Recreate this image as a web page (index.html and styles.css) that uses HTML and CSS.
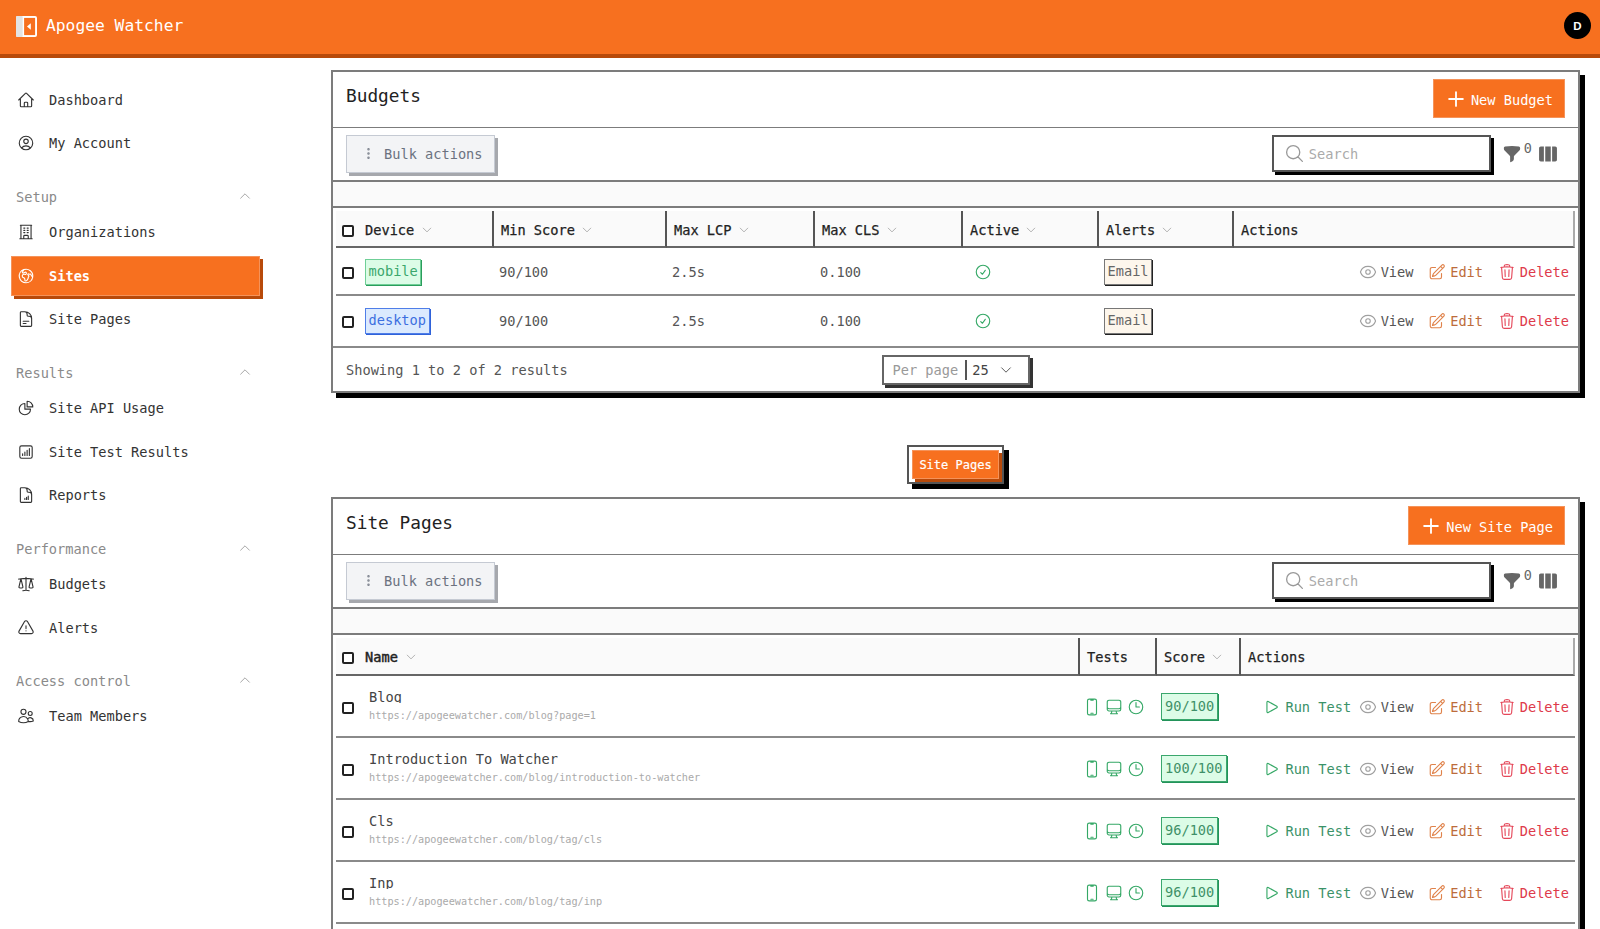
FILE: index.html
```html
<!DOCTYPE html>
<html lang="en">
<head>
<meta charset="utf-8">
<title>Apogee Watcher</title>
<link rel="stylesheet" href="styles.css">
</head>
<body>
<svg class="sprite" xmlns="http://www.w3.org/2000/svg">
<symbol id="i-home" viewBox="0 0 24 24"><path d="m2.25 12 8.954-8.955c.44-.439 1.152-.439 1.591 0L21.75 12M4.5 9.75v10.125c0 .621.504 1.125 1.125 1.125H9.75v-4.875c0-.621.504-1.125 1.125-1.125h2.25c.621 0 1.125.504 1.125 1.125V21h4.125c.621 0 1.125-.504 1.125-1.125V9.75M8.25 21h8.25"/></symbol>
<symbol id="i-user" viewBox="0 0 24 24"><path d="M17.982 18.725A7.488 7.488 0 0 0 12 15.75a7.488 7.488 0 0 0-5.982 2.975m11.963 0a9 9 0 1 0-11.963 0m11.963 0A8.966 8.966 0 0 1 12 21a8.966 8.966 0 0 1-5.982-2.275M15 9.75a3 3 0 1 1-6 0 3 3 0 0 1 6 0Z"/></symbol>
<symbol id="i-building" viewBox="0 0 24 24"><path d="M3.75 21h16.5M4.5 3h15M5.25 3v18m13.5-18v18M9 6.75h1.5m-1.5 3h1.5m-1.5 3h1.5m3-6H15m-1.5 3H15m-1.5 3H15M9 21v-3.375c0-.621.504-1.125 1.125-1.125h3.75c.621 0 1.125.504 1.125 1.125V21"/></symbol>
<symbol id="i-globe" viewBox="0 0 24 24"><path d="m20.893 13.393-1.135-1.135a2.252 2.252 0 0 1-.421-.585l-1.08-2.16a.414.414 0 0 0-.663-.107.827.827 0 0 1-.812.21l-1.273-.363a.89.89 0 0 0-.738 1.595l.587.39c.59.395.674 1.23.172 1.732l-.2.2c-.212.212-.33.498-.33.796v.41c0 .409-.11.809-.32 1.158l-1.315 2.191a2.11 2.11 0 0 1-1.81 1.025 1.055 1.055 0 0 1-1.055-1.055v-1.172c0-.92-.56-1.747-1.414-2.089l-.655-.261a2.25 2.25 0 0 1-1.383-2.46l.007-.042a2.25 2.25 0 0 1 .29-.787l.09-.15a2.25 2.25 0 0 1 2.37-1.048l1.178.236a1.125 1.125 0 0 0 1.302-.795l.208-.73a1.125 1.125 0 0 0-.578-1.315l-.665-.332-.091.091a2.25 2.25 0 0 1-1.591.659h-.18c-.249 0-.487.1-.662.274a.931.931 0 0 1-1.458-1.137l1.411-2.353a2.25 2.25 0 0 0 .286-.76m11.928 9.869A9 9 0 0 0 8.965 3.525m11.928 9.868A9 9 0 1 1 8.965 3.525"/></symbol>
<symbol id="i-doc" viewBox="0 0 24 24"><path d="M19.5 14.25v-2.625a3.375 3.375 0 0 0-3.375-3.375h-1.5A1.125 1.125 0 0 1 13.5 7.125v-1.5a3.375 3.375 0 0 0-3.375-3.375H8.25m0 12.75h7.5m-7.5 3H12M10.5 2.25H5.625c-.621 0-1.125.504-1.125 1.125v17.25c0 .621.504 1.125 1.125 1.125h12.75c.621 0 1.125-.504 1.125-1.125V11.25a9 9 0 0 0-9-9Z"/></symbol>
<symbol id="i-pie" viewBox="0 0 24 24"><path d="M10.5 6a7.5 7.5 0 1 0 7.5 7.5h-7.5V6Z"/><path d="M13.5 10.5H21A7.5 7.5 0 0 0 13.5 3v7.5Z"/></symbol>
<symbol id="i-chart" viewBox="0 0 24 24"><path d="M7.5 14.25v2.25m3-4.5v4.5m3-6.75v6.75m3-9v9M6 20.25h12A2.25 2.25 0 0 0 20.25 18V6A2.25 2.25 0 0 0 18 3.75H6A2.25 2.25 0 0 0 3.75 6v12A2.25 2.25 0 0 0 6 20.25Z"/></symbol>
<symbol id="i-docchart" viewBox="0 0 24 24"><path d="M19.5 14.25v-2.625a3.375 3.375 0 0 0-3.375-3.375h-1.5A1.125 1.125 0 0 1 13.5 7.125v-1.5a3.375 3.375 0 0 0-3.375-3.375H9m1.5 15.75v-1.5m2.25 1.5v-3m2.25 3v-4.5M10.5 2.25H5.625c-.621 0-1.125.504-1.125 1.125v17.25c0 .621.504 1.125 1.125 1.125h12.75c.621 0 1.125-.504 1.125-1.125V11.25a9 9 0 0 0-9-9Z"/></symbol>
<symbol id="i-scale" viewBox="0 0 24 24"><path d="M12 3v17.25m0 0c-1.472 0-2.882.265-4.185.75M12 20.25c1.472 0 2.882.265 4.185.75M18.75 4.97A48.416 48.416 0 0 0 12 4.5c-2.291 0-4.545.16-6.75.47m13.5 0c1.01.143 2.01.317 3 .52m-3-.52 2.62 10.726c.122.499-.106 1.028-.589 1.202a5.988 5.988 0 0 1-2.031.352 5.988 5.988 0 0 1-2.031-.352c-.483-.174-.711-.703-.59-1.202L18.75 4.971Zm-16.5.52c.99-.203 1.99-.377 3-.52m0 0 2.62 10.726c.122.499-.106 1.028-.589 1.202a5.989 5.989 0 0 1-2.031.352 5.989 5.989 0 0 1-2.031-.352c-.483-.174-.711-.703-.59-1.202L5.25 4.971Z"/></symbol>
<symbol id="i-warn" viewBox="0 0 24 24"><path d="M12 9v3.75m-9.303 3.376c-.866 1.5.217 3.374 1.948 3.374h14.71c1.73 0 2.813-1.874 1.948-3.374L13.949 3.378c-.866-1.5-3.032-1.5-3.898 0L2.697 16.126ZM12 15.75h.007v.008H12v-.008Z"/></symbol>
<symbol id="i-users" viewBox="0 0 24 24"><path d="M15 19.128a9.38 9.38 0 0 0 2.625.372 9.337 9.337 0 0 0 4.121-.952 4.125 4.125 0 0 0-7.533-2.493M15 19.128v-.003c0-1.113-.285-2.16-.786-3.07M15 19.128v.106A12.318 12.318 0 0 1 8.624 21c-2.331 0-4.512-.645-6.374-1.766l-.001-.109a6.375 6.375 0 0 1 11.964-3.07M12 6.375a3.375 3.375 0 1 1-6.75 0 3.375 3.375 0 0 1 6.75 0Zm8.25 2.25a2.625 2.625 0 1 1-5.25 0 2.625 2.625 0 0 1 5.25 0Z"/></symbol>
<symbol id="i-up" viewBox="0 0 24 24"><path d="m4.5 15.75 7.5-7.5 7.5 7.5"/></symbol>
<symbol id="i-down" viewBox="0 0 24 24"><path d="m19.5 8.25-7.5 7.5-7.5-7.5"/></symbol>
<symbol id="i-eye" viewBox="0 0 24 24"><path d="M2.036 12.322a1.012 1.012 0 0 1 0-.639C3.423 7.51 7.36 4.5 12 4.5c4.638 0 8.573 3.007 9.963 7.178.07.207.07.431 0 .639C20.577 16.49 16.64 19.5 12 19.5c-4.638 0-8.573-3.007-9.963-7.178Z"/><path d="M15 12a3 3 0 1 1-6 0 3 3 0 0 1 6 0Z"/></symbol>
<symbol id="i-edit" viewBox="0 0 24 24"><path d="m16.862 4.487 1.687-1.688a1.875 1.875 0 1 1 2.652 2.652L10.582 16.07a4.5 4.5 0 0 1-1.897 1.13L6 18l.8-2.685a4.5 4.5 0 0 1 1.13-1.897l8.932-8.931Zm0 0L19.5 7.125M18 14v4.75A2.25 2.25 0 0 1 15.75 21H5.25A2.25 2.25 0 0 1 3 18.75V8.25A2.25 2.25 0 0 1 5.25 6H10"/></symbol>
<symbol id="i-trash" viewBox="0 0 24 24"><path d="m14.74 9-.346 9m-4.788 0L9.26 9m9.968-3.21c.342.052.682.107 1.022.166m-1.022-.165L18.16 19.673a2.25 2.25 0 0 1-2.244 2.077H8.084a2.25 2.25 0 0 1-2.244-2.077L4.772 5.79m14.456 0a48.108 48.108 0 0 0-3.478-.397m-12 .562c.34-.059.68-.114 1.022-.165m0 0a48.11 48.11 0 0 1 3.478-.397m7.5 0v-.916c0-1.18-.91-2.164-2.09-2.201a51.964 51.964 0 0 0-3.32 0c-1.18.037-2.09 1.022-2.09 2.201v.916m7.5 0a48.667 48.667 0 0 0-7.5 0"/></symbol>
<symbol id="i-play" viewBox="0 0 24 24"><path d="M5.25 5.653c0-.856.917-1.398 1.667-.986l11.54 6.347a1.125 1.125 0 0 1 0 1.972l-11.54 6.347a1.125 1.125 0 0 1-1.667-.986V5.653Z"/></symbol>
<symbol id="i-phone" viewBox="0 0 24 24"><path d="M10.5 1.5H8.25A2.25 2.25 0 0 0 6 3.75v16.5a2.25 2.25 0 0 0 2.25 2.25h7.5A2.25 2.25 0 0 0 18 20.25V3.75a2.25 2.25 0 0 0-2.25-2.25H13.5m-3 0V3h3V1.5m-3 0h3m-3 18.75h3"/></symbol>
<symbol id="i-desktop" viewBox="0 0 24 24"><path d="M9 17.25v1.007a3 3 0 0 1-.879 2.122L7.5 21h9l-.621-.621A3 3 0 0 1 15 18.257V17.25m6-12V15a2.25 2.25 0 0 1-2.25 2.25H5.25A2.25 2.25 0 0 1 3 15V5.25m18 0A2.25 2.25 0 0 0 18.75 3H5.25A2.25 2.25 0 0 0 3 5.25m18 0V12a2.25 2.25 0 0 1-2.25 2.25H5.25A2.25 2.25 0 0 1 3 12V5.25"/></symbol>
<symbol id="i-clock" viewBox="0 0 24 24"><path d="M12 6v6h4.5m4.5 0a9 9 0 1 1-18 0 9 9 0 0 1 18 0Z"/></symbol>
<symbol id="i-check" viewBox="0 0 24 24"><path d="M9 12.75 11.25 15 15 9.75M21 12a9 9 0 1 1-18 0 9 9 0 0 1 18 0Z"/></symbol>
<symbol id="i-search" viewBox="0 0 24 24"><path d="m21 21-5.197-5.197m0 0A7.5 7.5 0 1 0 5.196 5.196a7.5 7.5 0 0 0 10.607 10.607Z"/></symbol>
<symbol id="i-plus" viewBox="0 0 24 24"><path d="M12 4.5v15m7.5-7.5h-15"/></symbol>
<symbol id="i-funnel" viewBox="0 0 24 24"><path class="solid" d="M3.792 2.938A49.069 49.069 0 0 1 12 2.25c2.797 0 5.54.236 8.209.688a1.857 1.857 0 0 1 1.541 1.836v1.044a3 3 0 0 1-.879 2.121l-6.182 6.182a1.5 1.5 0 0 0-.439 1.061v2.927a3 3 0 0 1-1.658 2.684l-1.757.878A.75.75 0 0 1 9.75 21v-5.818a1.5 1.5 0 0 0-.44-1.06L3.13 7.938a3 3 0 0 1-.879-2.121V4.774c0-.897.64-1.683 1.542-1.836Z"/></symbol>
<symbol id="i-cols" viewBox="0 0 24 24"><path class="solid" d="M15 3.75H9v16.5h6V3.75ZM16.5 20.25h3.375c1.035 0 1.875-.84 1.875-1.875V5.625c0-1.036-.84-1.875-1.875-1.875H16.5v16.5ZM4.125 3.75H7.5v16.5H4.125A1.875 1.875 0 0 1 2.25 18.375V5.625c0-1.036.84-1.875 1.875-1.875Z"/></symbol>
<symbol id="i-dots" viewBox="0 0 24 24"><path d="M12 6.75a.75.75 0 1 1 0-1.5.75.75 0 0 1 0 1.5ZM12 12.75a.75.75 0 1 1 0-1.5.75.75 0 0 1 0 1.5ZM12 18.75a.75.75 0 1 1 0-1.5.75.75 0 0 1 0 1.5Z"/></symbol>
</svg>

<div class="app">
  <header class="topbar">
    <div class="brand">
      <svg class="logo" viewBox="0 0 22 22"><rect x="0" y="0" width="22" height="22" rx="2" fill="#fff"/><rect x="0" y="0" width="7" height="22" rx="1" fill="#e3e3e3"/><rect x="8.5" y="2" width="11.5" height="18" fill="#f7701f"/><path d="M15.5 7.5v7l-4-3.5z" fill="#fff"/></svg>
      <span class="brand-name">Apogee Watcher</span>
    </div>
    <div class="avatar">D</div>
  </header>

  <div class="layout">
    <nav class="sidebar">
      <ul class="nav-group">
        <li class="nav-item"><svg class="ic-nav"><use href="#i-home"/></svg>Dashboard</li>
        <li class="nav-item"><svg class="ic-nav"><use href="#i-user"/></svg>My Account</li>
      </ul>
      <div class="nav-label">Setup<svg class="ic-chev"><use href="#i-up"/></svg></div>
      <ul class="nav-group">
        <li class="nav-item"><svg class="ic-nav"><use href="#i-building"/></svg>Organizations</li>
        <li class="nav-item active"><svg class="ic-nav"><use href="#i-globe"/></svg>Sites</li>
        <li class="nav-item"><svg class="ic-nav"><use href="#i-doc"/></svg>Site Pages</li>
      </ul>
      <div class="nav-label">Results<svg class="ic-chev"><use href="#i-up"/></svg></div>
      <ul class="nav-group">
        <li class="nav-item"><svg class="ic-nav"><use href="#i-pie"/></svg>Site API Usage</li>
        <li class="nav-item"><svg class="ic-nav"><use href="#i-chart"/></svg>Site Test Results</li>
        <li class="nav-item"><svg class="ic-nav"><use href="#i-docchart"/></svg>Reports</li>
      </ul>
      <div class="nav-label">Performance<svg class="ic-chev"><use href="#i-up"/></svg></div>
      <ul class="nav-group">
        <li class="nav-item"><svg class="ic-nav"><use href="#i-scale"/></svg>Budgets</li>
        <li class="nav-item"><svg class="ic-nav"><use href="#i-warn"/></svg>Alerts</li>
      </ul>
      <div class="nav-label">Access control<svg class="ic-chev"><use href="#i-up"/></svg></div>
      <ul class="nav-group">
        <li class="nav-item"><svg class="ic-nav"><use href="#i-users"/></svg>Team Members</li>
      </ul>
    </nav>

    <main class="content">
      <section class="card">
        <div class="card-head">
          <h2 class="card-title">Budgets</h2>
          <button class="btn-primary"><svg class="ic-plus"><use href="#i-plus"/></svg>New Budget</button>
        </div>
        <div class="toolbar">
          <button class="btn-bulk"><svg class="ic-dots"><use href="#i-dots"/></svg>Bulk actions</button>
          <div class="tools">
            <div class="search"><svg class="ic-search"><use href="#i-search"/></svg>Search</div>
            <span class="filter"><svg class="ic-tool"><use href="#i-funnel"/></svg><span class="filter-count">0</span></span>
            <svg class="ic-cols"><use href="#i-cols"/></svg>
          </div>
        </div>
        <div class="band"></div>
        <div class="table-wrap">
          <table class="tbl budgets">
            <colgroup><col class="b1"><col class="b2"><col class="b3"><col class="b4"><col class="b5"><col class="b6"><col></colgroup>
            <thead>
              <tr>
                <th><span class="first-cell"><span class="checkbox"></span>Device<svg class="ic-sort"><use href="#i-down"/></svg></span></th>
                <th>Min Score<svg class="ic-sort"><use href="#i-down"/></svg></th>
                <th>Max LCP<svg class="ic-sort"><use href="#i-down"/></svg></th>
                <th>Max CLS<svg class="ic-sort"><use href="#i-down"/></svg></th>
                <th>Active<svg class="ic-sort"><use href="#i-down"/></svg></th>
                <th>Alerts<svg class="ic-sort"><use href="#i-down"/></svg></th>
                <th class="th-last">Actions</th>
              </tr>
            </thead>
            <tbody>
              <tr>
                <td><span class="first-cell"><span class="checkbox"></span><span class="badge green">mobile</span></span></td>
                <td>90/100</td><td>2.5s</td><td>0.100</td>
                <td><svg class="ic-ok"><use href="#i-check"/></svg></td>
                <td><span class="badge plain">Email</span></td>
                <td><div class="actions"><span class="act view"><svg><use href="#i-eye"/></svg>View</span><span class="act edit"><svg><use href="#i-edit"/></svg>Edit</span><span class="act del"><svg><use href="#i-trash"/></svg>Delete</span></div></td>
              </tr>
              <tr>
                <td><span class="first-cell"><span class="checkbox"></span><span class="badge blue">desktop</span></span></td>
                <td>90/100</td><td>2.5s</td><td>0.100</td>
                <td><svg class="ic-ok"><use href="#i-check"/></svg></td>
                <td><span class="badge plain">Email</span></td>
                <td><div class="actions"><span class="act view"><svg><use href="#i-eye"/></svg>View</span><span class="act edit"><svg><use href="#i-edit"/></svg>Edit</span><span class="act del"><svg><use href="#i-trash"/></svg>Delete</span></div></td>
              </tr>
            </tbody>
          </table>
        </div>
        <div class="card-foot">
          <span class="showing">Showing 1 to 2 of 2 results</span>
          <div class="perpage"><span class="perpage-label">Per page</span><span class="perpage-value">25<svg class="ic-pp"><use href="#i-down"/></svg></span></div>
          <span></span>
        </div>
      </section>

      <div class="tabs"><div class="tab-box"><button class="tab">Site Pages</button></div></div>

      <section class="card card-open">
        <div class="card-head">
          <h2 class="card-title">Site Pages</h2>
          <button class="btn-primary"><svg class="ic-plus"><use href="#i-plus"/></svg>New Site Page</button>
        </div>
        <div class="toolbar">
          <button class="btn-bulk"><svg class="ic-dots"><use href="#i-dots"/></svg>Bulk actions</button>
          <div class="tools">
            <div class="search"><svg class="ic-search"><use href="#i-search"/></svg>Search</div>
            <span class="filter"><svg class="ic-tool"><use href="#i-funnel"/></svg><span class="filter-count">0</span></span>
            <svg class="ic-cols"><use href="#i-cols"/></svg>
          </div>
        </div>
        <div class="band"></div>
        <div class="table-wrap">
          <table class="tbl pages">
            <colgroup><col class="p1"><col class="p2"><col class="p3"><col></colgroup>
            <thead>
              <tr>
                <th class="th-strong"><span class="first-cell"><span class="checkbox"></span>Name<svg class="ic-sort"><use href="#i-down"/></svg></span></th>
                <th>Tests</th>
                <th>Score<svg class="ic-sort"><use href="#i-down"/></svg></th>
                <th class="th-last">Actions</th>
              </tr>
            </thead>
            <tbody>
              <tr>
                <td><span class="first-cell"><span class="checkbox"></span><span class="page-info"><span class="page-name">Blog</span><span class="page-url">https://apogeewatcher.com/blog?page=1</span></span></span></td>
                <td><span class="tests"><svg><use href="#i-phone"/></svg><svg><use href="#i-desktop"/></svg><svg><use href="#i-clock"/></svg></span></td>
                <td><span class="badge score">90/100</span></td>
                <td><div class="actions"><span class="act run"><svg><use href="#i-play"/></svg>Run Test</span><span class="act view"><svg><use href="#i-eye"/></svg>View</span><span class="act edit"><svg><use href="#i-edit"/></svg>Edit</span><span class="act del"><svg><use href="#i-trash"/></svg>Delete</span></div></td>
              </tr>
              <tr>
                <td><span class="first-cell"><span class="checkbox"></span><span class="page-info"><span class="page-name">Introduction To Watcher</span><span class="page-url">https://apogeewatcher.com/blog/introduction-to-watcher</span></span></span></td>
                <td><span class="tests"><svg><use href="#i-phone"/></svg><svg><use href="#i-desktop"/></svg><svg><use href="#i-clock"/></svg></span></td>
                <td><span class="badge score">100/100</span></td>
                <td><div class="actions"><span class="act run"><svg><use href="#i-play"/></svg>Run Test</span><span class="act view"><svg><use href="#i-eye"/></svg>View</span><span class="act edit"><svg><use href="#i-edit"/></svg>Edit</span><span class="act del"><svg><use href="#i-trash"/></svg>Delete</span></div></td>
              </tr>
              <tr>
                <td><span class="first-cell"><span class="checkbox"></span><span class="page-info"><span class="page-name">Cls</span><span class="page-url">https://apogeewatcher.com/blog/tag/cls</span></span></span></td>
                <td><span class="tests"><svg><use href="#i-phone"/></svg><svg><use href="#i-desktop"/></svg><svg><use href="#i-clock"/></svg></span></td>
                <td><span class="badge score">96/100</span></td>
                <td><div class="actions"><span class="act run"><svg><use href="#i-play"/></svg>Run Test</span><span class="act view"><svg><use href="#i-eye"/></svg>View</span><span class="act edit"><svg><use href="#i-edit"/></svg>Edit</span><span class="act del"><svg><use href="#i-trash"/></svg>Delete</span></div></td>
              </tr>
              <tr>
                <td><span class="first-cell"><span class="checkbox"></span><span class="page-info"><span class="page-name">Inp</span><span class="page-url">https://apogeewatcher.com/blog/tag/inp</span></span></span></td>
                <td><span class="tests"><svg><use href="#i-phone"/></svg><svg><use href="#i-desktop"/></svg><svg><use href="#i-clock"/></svg></span></td>
                <td><span class="badge score">96/100</span></td>
                <td><div class="actions"><span class="act run"><svg><use href="#i-play"/></svg>Run Test</span><span class="act view"><svg><use href="#i-eye"/></svg>View</span><span class="act edit"><svg><use href="#i-edit"/></svg>Edit</span><span class="act del"><svg><use href="#i-trash"/></svg>Delete</span></div></td>
              </tr>
            </tbody>
          </table>
        </div>
      </section>
    </main>
  </div>
</div>
</body>
</html>
```

FILE: styles.css
```css
* { box-sizing: border-box; }
html, body { margin: 0; padding: 0; height: 100%; overflow: hidden; background: #fff; }
body { font-family: "DejaVu Sans Mono", "Liberation Mono", monospace; font-size: 13.65px; color: #333; }
.sprite { display: none; }
symbol path { fill: none; stroke: currentColor; stroke-linecap: round; stroke-linejoin: round; }
symbol path.solid { fill: currentColor; stroke: none; }
svg { flex: none; stroke-width: 1.5; }

.app { display: flex; flex-direction: column; height: 100vh; overflow: hidden; }

.topbar { height: 58px; flex: none; background: #f7701f; border-bottom: 4px solid #b84a0a; display: flex; align-items: center; justify-content: space-between; padding: 0 9px 0 16px; }
.brand { display: flex; align-items: center; gap: 9px; }
.logo { width: 21px; height: 21px; margin-top: -1px; }
.brand-name { color: #fff; font-size: 16.3px; margin-top: -4px; }
.avatar { width: 27px; height: 27px; border-radius: 50%; background: #000; color: #fff; display: flex; align-items: center; justify-content: center; font-size: 11.5px; font-weight: 700; font-family: "Liberation Sans", sans-serif; margin-top: -3px; }

.layout { flex: 1; display: flex; min-height: 0; }
.sidebar { width: 331px; flex: none; padding: 21.5px 0 0 11px; }
.nav-group { list-style: none; margin: 0; padding: 0; width: 249px; display: flex; flex-direction: column; gap: 3.7px; }
.nav-item { height: 40px; display: flex; align-items: center; gap: 14px; padding-left: 6px; color: #333; }
.nav-item.active { background: #f7701f; color: #fff; font-weight: 700; box-shadow: 3px 3px 0 #b84a0a; border: 1px solid #f5935a; padding-left: 5px; }
.ic-nav { width: 18px; height: 18px; color: #333; }
.active .ic-nav { color: #fff; }
.nav-label { width: 249px; height: 20px; margin: 23.5px 0 5.2px; padding: 0 8px 0 5px; display: flex; align-items: center; justify-content: space-between; color: #8a8a8a; }
.ic-chev { width: 14px; height: 14px; color: #9a9a9a; margin-top: -2px; }

.content { flex: 1; min-width: 0; padding: 12px 20px 0 0; }
.card { background: #fff; border: 2px solid #7c7c7c; box-shadow: 5px 5px 0 #000; }
.card-open { padding-bottom: 40px; }
.card-head { height: 55.5px; border-bottom: 1px solid #7c7c7c; display: flex; align-items: center; justify-content: space-between; padding: 0 13px; }
.card-title { margin: -7px 0 0; font-size: 17.8px; font-weight: 400; color: #222; }
.btn-primary { height: 39px; padding: 2px 11px 0 11px; background: #f7701f; border: 1px solid #f5935a; color: #fff; font: inherit; display: flex; align-items: center; gap: 4px; margin-top: -1px; }
.ic-plus { width: 22px; height: 22px; stroke-width: 2; margin-top: -2px; }

.toolbar { height: 54px; display: flex; align-items: center; justify-content: space-between; padding: 0 13px; border-bottom: 2px solid #7c7c7c; }
.btn-bulk { height: 38px; width: 149px; background: #f3f4f6; border: 1px solid #c5cad3; box-shadow: 3px 3px 0 #a6a8ad; color: #6b7280; font: inherit; display: flex; align-items: center; gap: 7px; padding: 0 0 0 13px; }
.ic-dots { width: 17px; height: 17px; color: #7d838e; stroke-width: 2; }
.tools { display: flex; align-items: center; padding-right: 6px; }
.search { width: 219px; height: 37px; border: 2px solid #555; background: #fff; box-shadow: 3px 3px 0 #000; display: flex; align-items: center; gap: 4px; padding: 0 0 0 10px; color: #aaa; }
.ic-search { width: 21px; height: 21px; color: #999; }
.filter { display: flex; align-items: flex-start; margin-left: 11px; margin-right: 5px; color: #666; }
.ic-tool { width: 20px; height: 20px; color: #666; }
.ic-cols { width: 22px; height: 22px; color: #666; }
.filter-count { font-size: 13.5px; line-height: 14px; margin-top: -3px; margin-left: 2px; color: #666; }

.band { height: 26px; background: #fafafa; border-bottom: 2px solid #7c7c7c; }
.table-wrap { padding: 3px; }
.tbl { width: 100%; table-layout: fixed; border-collapse: separate; border-spacing: 0; }
.tbl th { height: 37.5px; background: #fafafa; text-align: left; font-weight: 400; -webkit-text-stroke: 0.25px #222; padding: 3px 0 0 7px; border-bottom: 2px solid #666; border-right: 2px solid #555; color: #222; white-space: nowrap; }
.tbl th:last-child { border-right: 2px solid #aaa; }
.tbl th:first-child { padding-left: 6px; }
.tbl th.th-strong { -webkit-text-stroke: 0.45px #222; border-right-color: #555; }
.tbl td { padding: 3px 0 0 5px; color: #555; white-space: nowrap; }
.tbl td:first-child { padding-left: 6px; }
.budgets td { height: 47.5px; }
.budgets tbody tr:first-child td { border-bottom: 2px solid #8a8a8a; }
.pages th { height: 38px; }
.pages td { height: 62.1px; padding-top: 2px; border-bottom: 2px solid #8a8a8a; }
.pages td:nth-child(3) { padding-left: 4px; }
.b1 { width: 158px; } .b2 { width: 173px; } .b3 { width: 148px; } .b4 { width: 148px; } .b5 { width: 136px; } .b6 { width: 135px; }
.p1 { width: 744px; } .p2 { width: 77px; } .p3 { width: 84px; }

.first-cell { display: flex; align-items: center; gap: 11px; }
.checkbox { width: 12px; height: 12px; border: 2px solid #222; border-radius: 2px; background: #fff; flex: none; margin-top: 2px; }
.ic-sort { width: 12px; height: 12px; color: #9a9a9a; margin-left: 6px; vertical-align: -1px; }
.first-cell .ic-sort { margin-left: -4px; }

.badge { display: inline-flex; align-items: center; height: 26px; padding: 0 2.5px; border: 1px solid; line-height: 1; }
.badge.green { background: #dcfce7; border-color: #6fcf97; box-shadow: 1px 1px 0 #2a9d5c; color: #3aa76d; }
.badge.blue { background: #dbeafe; border-color: #4f7ee8; box-shadow: 1px 1px 0 #2f62d9; color: #3b6fe0; }
.badge.plain { background: #fdf6ec; border-color: #777; box-shadow: 1px 1px 0 #222; color: #666; }
.badge.score { background: #dcfce7; border-color: #3aa76d; box-shadow: 1px 1px 0 #23935a; color: #3f9068; height: 27px; padding: 0 3px; }
.ic-ok { width: 18px; height: 18px; color: #35a866; display: block; margin-left: 6px; }

.actions { display: flex; justify-content: flex-end; align-items: center; gap: 14.7px; padding-right: 6px; }
.act { display: flex; align-items: center; gap: 4px; }
.act svg { width: 18px; height: 18px; }
.view { color: #555; } .view svg { color: #a0a0a0; }
.edit { color: #bd6c3c; } .edit svg { color: #e0824a; }
.del { color: #de3a4b; } .del svg { color: #e5485a; }
.run { color: #3b9268; margin-right: -7.2px; } .run svg { color: #35a866; }

.card-foot { height: 45px; border-top: 2px solid #8a8a8a; display: grid; grid-template-columns: 1fr auto 1fr; align-items: center; padding: 0 13px; }
.showing { color: #555; }
.perpage { height: 30px; width: 148px; border: 2px solid #666; box-shadow: 3px 3px 0 #333; display: flex; align-items: center; padding-left: 9px; color: #999; background: #fff; }
.perpage-label { padding-right: 7px; line-height: 20px; }
.perpage-value { border-left: 2px solid #555; padding-left: 5px; color: #444; display: flex; align-items: center; gap: 10px; line-height: 20px; }
.ic-pp { width: 14px; height: 14px; color: #444; }

.tabs { display: flex; justify-content: center; margin: 52px 0 13px; }
.tab-box { padding: 3px; border: 2px solid #555; background: #fff; box-shadow: 5px 5px 0 #000; display: flex; }
.tab { width: 87px; height: 29px; padding: 0; border: 1px solid #f5935a; background: #f7701f; box-shadow: 3px 3px 0 #b84a0a; color: #fff; font: inherit; font-size: 12px; -webkit-text-stroke: 0.2px #fff; }

.page-info { display: flex; flex-direction: column; padding-left: 4px; }
.page-name { height: 13.5px; line-height: 15px; margin-bottom: 3.5px; overflow: hidden; color: #444; }
.page-url { font-size: 10.2px; line-height: 17px; color: #aaa; }
.tests { display: flex; align-items: center; gap: 4px; margin-left: -2px; }
.tests svg { width: 18px; height: 18px; color: #35a866; }
```
